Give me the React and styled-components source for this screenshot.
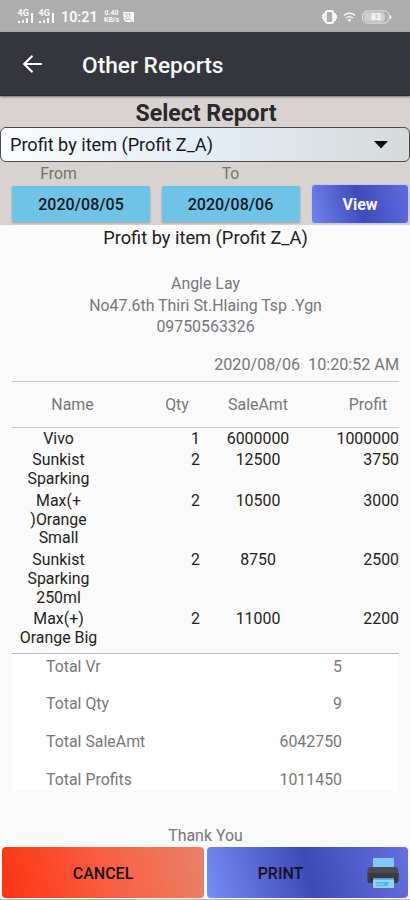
import React from 'react'
import styled, { createGlobalStyle } from 'styled-components'

const GlobalStyle = createGlobalStyle`
  * {
    box-sizing: border-box;
  }

  body {
    margin: 0;
    background: #fafafa;
    font-family: Roboto, 'Liberation Sans', sans-serif;
  }

  button {
    font-family: inherit;
    border: none;
    padding: 0;
  }
`

const Screen = styled.div`
  display: flex;
  flex-direction: column;
  width: 410px;
  height: 900px;
  overflow: hidden;
  background: #fafafa;
`

const StatusBar = styled.div`
  display: flex;
  flex: none;
  align-items: center;
  justify-content: space-between;
  height: 32px;
  padding: 1px 18px 0 17px;
  background: #adadad;
  color: #fafafa;

  svg {
    display: block;
  }
`

const StatusGroup = styled.div`
  display: flex;
  align-items: center;
  gap: ${props => props.$gap}px;
`

const Clock = styled.div`
  width: 37px;
  margin-left: 2px;
  font-size: 14.3px;
  font-weight: 600;
  line-height: 16px;
  white-space: nowrap;
`

const Speed = styled.div`
  width: 17px;
  margin-left: 2px;
  font-size: 7px;
  font-weight: 700;
  line-height: 6.5px;
  text-align: center;
`

const AppBar = styled.div`
  display: flex;
  flex: none;
  align-items: center;
  height: 64px;
  padding-left: 22px;
  background: #35353d;
  border-bottom: 1px solid #2c2c31;
  color: #fafafa;
  box-shadow: 0 1px 2px rgba(0, 0, 0, 0.5);
  z-index: 1;

  .title {
    margin: 3px 0 0 39px;
    font-size: 22.7px;
    font-weight: 500;
  }
`

const Filters = styled.div`
  flex: none;
  height: 129px;
  background: #d8d3d1;

  .heading {
    height: 31px;
    padding-left: 2px;
    font-size: 23.1px;
    font-weight: 700;
    line-height: 35px;
    text-align: center;
    color: #29282b;
  }
`

const Select = styled.div`
  display: flex;
  align-items: center;
  justify-content: space-between;
  height: 35px;
  padding: 0 21px 0 9px;
  border: 1px solid #4b4b4f;
  border-radius: 6px;
  background: linear-gradient(90deg, #fbfdff 0%, #e3edf6 50%, #d6dad9 100%);
  font-size: 18.1px;
  color: #17181b;
`

const FilterRow = styled.div`
  display: grid;
  grid-template-columns: 138px 138px 98px;
  column-gap: 11.5px;
  padding-left: 12px;
`

const FilterLabel = styled.div`
  height: 22px;
  padding-right: ${props => props.$shift}px;
  font-size: 15.8px;
  line-height: 23px;
  text-align: center;
  color: #77726f;
`

const DateButton = styled.button`
  height: 36px;
  margin-top: 2px;
  background: #6ec3e7;
  box-shadow: 0 1px 2px rgba(0, 0, 0, 0.25);
  font-size: 16px;
  font-weight: 500;
  letter-spacing: 0.05px;
  color: #11181c;
`

const ViewButton = styled.button`
  height: 40px;
  border: 1px solid #c6c9ed;
  border-radius: 4px;
  background: linear-gradient(75deg, #7184ee 0%, #3f4bbb 50%, #5f6cdb 100%);
  font-size: 16px;
  font-weight: 700;
  color: #f5f6ff;
`

const Report = styled.div`
  flex: 1;
  padding: 0 11px 0 12px;
  font-size: 15.9px;
  color: #77777a;
`

const ReportTitle = styled.div`
  height: 48px;
  padding-top: 2px;
  font-size: 18.25px;
  line-height: 21px;
  text-align: center;
  color: #202022;
`

const Shop = styled.div`
  font-size: 15.9px;
  line-height: 21.6px;
  text-align: center;
`

const PrintedAt = styled.div`
  height: 43px;
  padding-top: 17px;
  font-size: 16.15px;
  line-height: 20px;
  text-align: right;
  white-space: pre;
`

const Columns = styled.div`
  display: grid;
  grid-template-columns: 93px 95px 116px 83px;
`

const TableHead = styled(Columns)`
  height: 47px;
  border-top: 1px solid #c3c8cb;
  border-bottom: 1px solid #c3c8cb;
  line-height: 46px;
  text-align: center;

  .name {
    padding-left: 28px;
  }

  .qty {
    padding-left: 49px;
  }

  .profit {
    padding-left: 21px;
  }
`

const TableBody = styled.div`
  height: 226px;
  padding-top: 1px;
  border-bottom: 1px solid #b6bac8;
  color: #1f1f21;
`

const Row = styled(Columns)`
  padding: 1.2px 0;
  line-height: 18.95px;

  .name {
    text-align: center;
    white-space: pre-line;
  }

  .amount {
    text-align: center;
  }

  .qty,
  .profit {
    text-align: right;
  }
`

const Totals = styled.div`
  height: 137px;
  padding: 3px 57px 0 34px;
  background: #fff;
`

const TotalRow = styled.div`
  display: flex;
  justify-content: space-between;
  height: 37.6px;
  line-height: 20px;
`

const Thanks = styled.div`
  padding-top: 35px;
  line-height: 20px;
  text-align: center;
`

const Actions = styled.div`
  display: grid;
  flex: none;
  grid-template-columns: 202px 201px;
  column-gap: 3px;
  height: 53px;
  padding: 0 2px 1px;
  border-bottom: 1px solid #bcb9b8;
`

const ActionButton = styled.button`
  display: flex;
  align-items: center;
  height: 51px;
  border-radius: 4px;
  background: ${props => props.$background};
  font-size: 16px;
  font-weight: 500;
  color: #17131c;

  .label {
    flex: 1;
    padding-top: 1px;
  }

  .icon {
    width: 54px;
    padding-left: 12px;
  }

  svg {
    display: block;
  }
`

const rows = [
  { name: 'Vivo', qty: 1, amount: 6000000, profit: 1000000 },
  { name: 'Sunkist\nSparking', qty: 2, amount: 12500, profit: 3750 },
  { name: 'Max(+\n)Orange\nSmall', qty: 2, amount: 10500, profit: 3000 },
  { name: 'Sunkist\nSparking\n250ml', qty: 2, amount: 8750, profit: 2500 },
  { name: 'Max(+)\nOrange Big', qty: 2, amount: 11000, profit: 2200 },
]

const totals = [
  { label: 'Total Vr', value: 5 },
  { label: 'Total Qty', value: 9 },
  { label: 'Total SaleAmt', value: 6042750 },
  { label: 'Total Profits', value: 1011450 },
]

function SignalIcon() {
  return (
    <svg width="18" height="15" viewBox="0 0 18 15" fill="currentColor">
      <text x="0.5" y="7" fontSize="9" fontWeight="700">
        4G
      </text>
      <path d="M1 12h2v2H1zM5 11h2v3H5zM9 9h2v5H9zM14 4h2v10h-2z" />
    </svg>
  )
}

function SimIcon() {
  return (
    <svg width="11" height="12" viewBox="0 0 11 12">
      <path d="M0 1h11v10H3L1 9z" fill="#fafafa" />
      <path
        d="M1 2l8.5 9M3 3h4v3M3 6v2.5h3"
        fill="none"
        stroke="#adadad"
        strokeWidth="0.9"
      />
    </svg>
  )
}

function VibrateIcon() {
  return (
    <svg width="15" height="16" viewBox="0 0 15 16">
      <path
        d="M2 4v8M13 4v8M0.8 6v4M14.2 6v4"
        stroke="#fafafa"
        strokeWidth="1.7"
      />
      <rect
        x="3.8"
        y="1.9"
        width="7.4"
        height="12.2"
        rx="2"
        fill="#adadad"
        stroke="#fafafa"
        strokeWidth="2"
      />
    </svg>
  )
}

function WifiIcon() {
  return (
    <svg width="13" height="12" viewBox="0 0 13 12" fill="none">
      <path
        d="M0.8 4.5q5.7-4.4 11.4 0M3 7q3.5-2.8 7 0"
        stroke="#fafafa"
        strokeWidth="1.4"
      />
      <path d="M4.6 8.7q1.9-1.4 3.8 0L6.5 11z" fill="#fafafa" />
    </svg>
  )
}

function BatteryIcon() {
  return (
    <svg width="30" height="14" viewBox="0 0 30 14">
      <rect
        x="0.6"
        y="0.9"
        width="26.6"
        height="12.2"
        rx="5"
        fill="none"
        stroke="#e4e4e4"
        strokeWidth="1"
      />
      <rect x="2" y="2.3" width="21" height="9.4" rx="3.6" fill="#cfcfcf" />
      <path d="M28 4.5q3 2.5 0 5z" fill="#f4f4f4" />
      <text
        x="14"
        y="10"
        fill="#fff"
        fontSize="8.5"
        fontWeight="700"
        textAnchor="middle"
      >
        83
      </text>
    </svg>
  )
}

function BackArrow() {
  return (
    <svg width="21" height="20" viewBox="0 0 21 20" fill="none">
      <path
        d="M10.5 1.7L2.2 10l8.3 8.3M2.4 10H20"
        stroke="currentColor"
        strokeWidth="2.2"
      />
    </svg>
  )
}

function PrinterIcon() {
  return (
    <svg width="34" height="34" viewBox="0 0 34 34">
      <path d="M7 2h21v11H7z" fill="#80c8f8" />
      <path
        d="M5.5 11h23a4 4 0 0 1 4 4v9a3 3 0 0 1-3 3h-25a3 3 0 0 1-3-3v-9a4 4 0 0 1 4-4z"
        fill="#4a4b50"
      />
      <path d="M1.5 17h31v7a3 3 0 0 1-3 3h-25a3 3 0 0 1-3-3z" fill="#3b3c41" />
      <path d="M5 22h24v2H5z" fill="#26282d" />
      <path d="M7 22.5h21V32H7z" fill="#8dd3fb" />
      <path d="M7 22.5h21V24H7z" fill="#68ace0" />
      <path d="M10 26h13l-1.5 4H10z" fill="#57b0ef" />
      <path d="M10 27.5h8V29h-8z" fill="#84cdf8" />
    </svg>
  )
}

function App() {
  return (
    <Screen>
      <GlobalStyle />
      <StatusBar>
        <StatusGroup $gap={3}>
          <SignalIcon />
          <SignalIcon />
          <Clock>10:21</Clock>
          <Speed>
            0.40
            <br />
            KB/s
          </Speed>
          <SimIcon />
        </StatusGroup>
        <StatusGroup $gap={6}>
          <VibrateIcon />
          <WifiIcon />
          <BatteryIcon />
        </StatusGroup>
      </StatusBar>

      <AppBar>
        <BackArrow />
        <div className="title">Other Reports</div>
      </AppBar>

      <Filters>
        <div className="heading">Select Report</div>
        <Select>
          Profit by item (Profit Z_A)
          <svg width="14" height="8" viewBox="0 0 14 8">
            <path d="M0 0h14L7 7.5z" fill="#090a0b" />
          </svg>
        </Select>
        <FilterRow>
          <FilterLabel $shift={45}>From</FilterLabel>
          <FilterLabel $shift={0}>To</FilterLabel>
          <span />
          <DateButton>2020/08/05</DateButton>
          <DateButton>2020/08/06</DateButton>
          <ViewButton>View</ViewButton>
        </FilterRow>
      </Filters>

      <Report>
        <ReportTitle>Profit by item (Profit Z_A)</ReportTitle>
        <Shop>
          Angle Lay
          <br />
          No47.6th Thiri St.Hlaing Tsp .Ygn
          <br />
          09750563326
        </Shop>
        <PrintedAt>{'2020/08/06  10:20:52 AM'}</PrintedAt>
        <TableHead>
          <div className="name">Name</div>
          <div className="qty">Qty</div>
          <div className="amount">SaleAmt</div>
          <div className="profit">Profit</div>
        </TableHead>
        <TableBody>
          {rows.map((row, i) => (
            <Row key={i}>
              <div className="name">{row.name}</div>
              <div className="qty">{row.qty}</div>
              <div className="amount">{row.amount}</div>
              <div className="profit">{row.profit}</div>
            </Row>
          ))}
        </TableBody>
        <Totals>
          {totals.map(total => (
            <TotalRow key={total.label}>
              <div>{total.label}</div>
              <div>{total.value}</div>
            </TotalRow>
          ))}
        </Totals>
        <Thanks>Thank You</Thanks>
      </Report>

      <Actions>
        <ActionButton $background="linear-gradient(75deg, #fb3411 0%, #fa5d40 50%, #e98269 100%)">
          <span className="label">CANCEL</span>
        </ActionButton>
        <ActionButton $background="linear-gradient(75deg, #788cf5 0%, #3f4ab8 50%, #6371df 100%)">
          <span className="label">PRINT</span>
          <span className="icon">
            <PrinterIcon />
          </span>
        </ActionButton>
      </Actions>
    </Screen>
  )
}

export default App
